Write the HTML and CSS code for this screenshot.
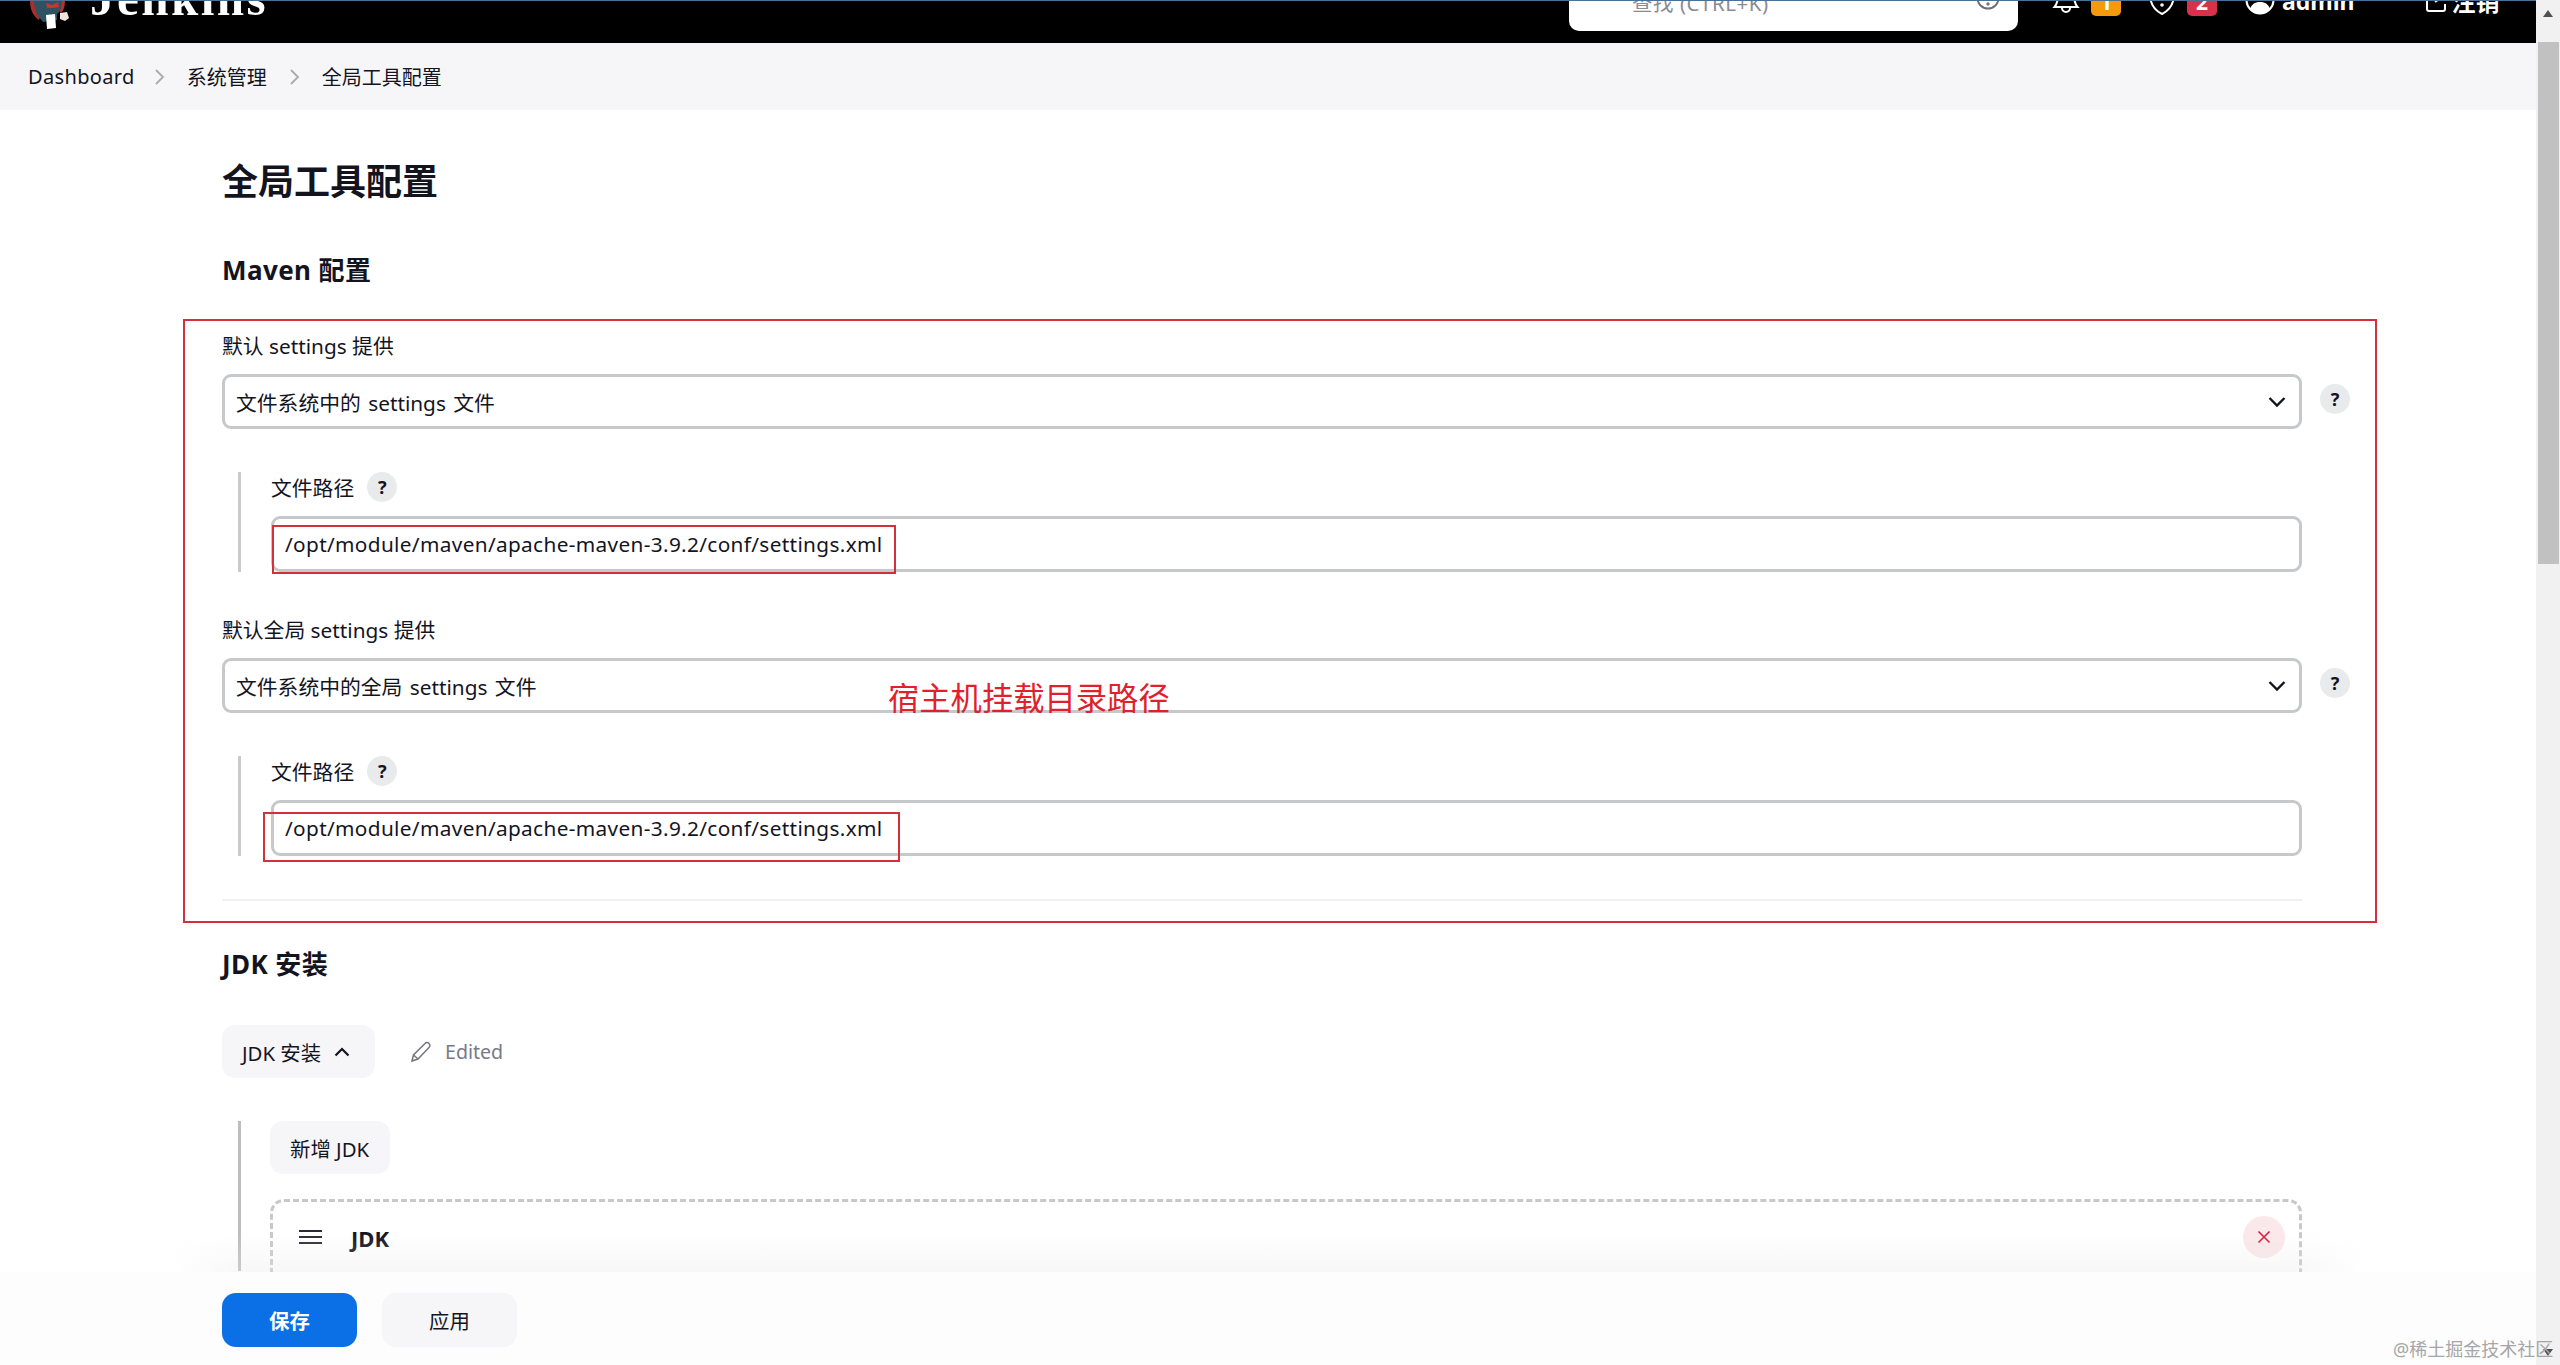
FILE: index.html
```html
<!DOCTYPE html>
<html lang="zh">
<head>
<meta charset="utf-8">
<title>全局工具配置</title>
<link rel="stylesheet" href="styles.css">
</head>
<body>
<div class="app">
  <div class="page">
    <header class="topbar">
      <div class="topbar-inner">
        <div class="brand">
          <svg class="butler" width="46" height="32" viewBox="0 0 46 32">
            <path d="M3 0 C3 10 6 16 12 20 L16 8 L18 0Z" fill="#a92f2c"/>
            <path d="M38 0 C38 6 37 10 34 13 L30 8 L28 0Z" fill="#b5322d"/>
            <path d="M7 0 H35 C35 8 33 12 30 14 L30 20 L16 22 L11 16 C8 10 7 6 7 0Z" fill="#2f5263"/>
            <path d="M19 3 L25 5 L31 2 L32 7 L26 8 L20 8Z" fill="#c9342c"/>
            <path d="M19 15 L28 14 L29 28 L20 29Z" fill="#fff"/>
            <path d="M33 13 L40 12 L42 18 L38 21 L33 19Z" fill="#f1e4d8"/>
          </svg>
          <span class="wordmark">Jenkins</span>
        </div>
        <div class="search">
          <svg class="search-icon" width="22" height="22" viewBox="0 0 22 22" fill="none" stroke="#4d4d58" stroke-width="2"><circle cx="10" cy="10" r="7"/><path d="M15 15l5 5"/></svg>
          <span class="search-text">查找 (CTRL+K)</span>
          <svg width="24" height="24" viewBox="0 0 24 24" fill="none" stroke="#6f6f7b" stroke-width="2"><circle cx="12" cy="12" r="10.5"/><path d="M9 9a3 3 0 1 1 4.500 2.600c-1 .6-1.500 1.200-1.500 2.400"/><circle cx="12" cy="18" r=".7"/></svg>
        </div>
        <div class="actions">
          <svg class="icon-bell" width="28" height="32" viewBox="0 0 28 32" fill="none" stroke="#fff" stroke-width="2"><path d="M14 2c-5 0-8 4-8 9 0 6-1 9-3.500 12h23C23 20 22 17 22 11c0-5-3-9-8-9z"/><path d="M10 24a4 4 0 0 0 8 0"/></svg>
          <span class="badge badge-orange">1</span>
          <svg class="icon-shield" width="28" height="32" viewBox="0 0 28 32" fill="none" stroke="#fff" stroke-width="2"><path d="M14 30C6 26 2 20 2 10V5l12-3 12 3v5c0 10-4 16-12 20z"/><path d="M14 9v7"/><circle cx="14" cy="21" r=".8"/></svg>
          <span class="badge badge-red">2</span>
          <svg class="icon-user" width="30" height="30" viewBox="0 0 30 30"><circle cx="15" cy="15" r="13.500" fill="none" stroke="#fff" stroke-width="2"/><circle cx="15" cy="11" r="5" fill="#fff"/><path d="M5 24c2-6 6-7 10-7s8 1 10 7c-3 3-6 5-10 5s-7-2-10-5z" fill="#fff"/></svg>
          <span class="user-name">admin</span>
          <svg class="icon-caret" width="12" height="8" viewBox="0 0 12 8" fill="none" stroke="#d5d5d5" stroke-width="1.500"><path d="M1 1l5 5 5-5"/></svg>
          <svg class="icon-logout" width="26" height="26" viewBox="0 0 26 26" fill="none" stroke="#fff" stroke-width="2"><path d="M12 2H4a2 2 0 0 0-2 2v18a2 2 0 0 0 2 2h14a2 2 0 0 0 2-2v-5"/><path d="M10 15L24 5M17 3h7v7"/></svg>
          <span class="logout-text">注销</span>
        </div>
      </div>
    </header>

    <nav class="breadcrumbs">
      <span class="crumb-latin">Dashboard</span>
      <svg class="crumb-sep" width="12" height="20" viewBox="0 0 12 20" fill="none" stroke="#a9a9b0" stroke-width="1.800"><path d="M2 3l7 7-7 7"/></svg>
      <span>系统管理</span>
      <svg class="crumb-sep" width="12" height="20" viewBox="0 0 12 20" fill="none" stroke="#a9a9b0" stroke-width="1.800"><path d="M2 3l7 7-7 7"/></svg>
      <span>全局工具配置</span>
    </nav>

    <main class="content">
      <h1 class="page-title">全局工具配置</h1>
      <h2 class="section-title">Maven 配置</h2>

      <div class="form-label">默认 settings 提供</div>
      <div class="select-row">
        <div class="select"><span>文件系统中的 settings 文件</span>
          <svg width="18" height="12" viewBox="0 0 18 12" fill="none" stroke="#14141f" stroke-width="2.400"><path d="M1.500 2l7.500 7.500L16.500 2"/></svg>
        </div>
        <span class="help">?</span>
      </div>
      <div class="nested">
        <div class="nested-label"><span>文件路径</span><span class="help">?</span></div>
        <div class="text-input">/opt/module/maven/apache-maven-3.9.2/conf/settings.xml</div>
      </div>

      <div class="form-label form-label-second">默认全局 settings 提供</div>
      <div class="select-row">
        <div class="select"><span>文件系统中的全局 settings 文件</span>
          <svg width="18" height="12" viewBox="0 0 18 12" fill="none" stroke="#14141f" stroke-width="2.400"><path d="M1.500 2l7.500 7.500L16.500 2"/></svg>
        </div>
        <span class="help">?</span>
      </div>
      <div class="nested">
        <div class="nested-label"><span>文件路径</span><span class="help">?</span></div>
        <div class="text-input">/opt/module/maven/apache-maven-3.9.2/conf/settings.xml</div>
      </div>

      <div class="divider"></div>

      <h2 class="section-title section-jdk">JDK 安装</h2>
      <div class="tool-row">
        <span class="btn btn-toggle">JDK 安装
          <svg width="16" height="10" viewBox="0 0 16 10" fill="none" stroke="#14141f" stroke-width="2.200"><path d="M1.500 8.500L8 2l6.500 6.500"/></svg>
        </span>
        <svg class="pencil" width="22" height="22" viewBox="0 0 22 22" fill="none" stroke="#77777f" stroke-width="1.500"><path d="M2 20l1.500-6L15 2.500a2.500 2.500 0 0 1 4 0 2.800 2.800 0 0 1 0 4L8 18z"/><path d="M3.500 14L8 18"/></svg>
        <span class="edited">Edited</span>
      </div>
      <div class="jdk-nested">
        <span class="btn btn-add">新增 JDK</span>
        <div class="repeat-box">
          <svg class="drag" width="23" height="14" viewBox="0 0 23 14" stroke="#2a2a35" stroke-width="2"><path d="M0 1h23M0 7h23M0 13h23"/></svg>
          <strong class="repeat-title">JDK</strong>
          <span class="delete"><svg width="14" height="14" viewBox="0 0 14 14" stroke="#d81b3c" stroke-width="1.600"><path d="M1.500 1.500l11 11M12.500 1.500l-11 11"/></svg></span>
        </div>
      </div>
    </main>

    <div class="bottom-bar">
      <span class="btn-save">保存</span>
      <span class="btn-apply">应用</span>
    </div>

    <div class="frame frame-main"></div>
    <div class="frame frame-path-one"></div>
    <div class="frame frame-path-two"></div>
    <div class="annotation">宿主机挂载目录路径</div>
  </div>

  <aside class="scrollbar">
    <span class="arrow-up"></span>
    <span class="thumb"></span>
    <span class="arrow-down"></span>
  </aside>
</div>
<div class="watermark">@稀土掘金技术社区</div>
</body>
</html>
```
FILE: styles.css
```css
* { box-sizing: border-box; }
html, body { margin: 0; height: 1365px; overflow: hidden; background: #fff; }
body {
  font-family: "Noto Sans", "Noto Sans CJK SC", sans-serif;
  font-size: 20.4px;
  color: #14141f;
  position: relative;
}
.app { display: flex; height: 1365px; }
.page { flex: 1; min-width: 0; position: relative; overflow: hidden; }

/* top bar, scrolled so that most of it is cut off */
.topbar { height: 43px; background: #000; border-top: 1px solid #4d7196; overflow: hidden; }
.topbar-inner {
  height: 86px;
  margin-top: -44px;
  display: flex;
  align-items: center;
  color: #fff;
}
.brand { display: flex; align-items: center; margin-left: 27px; width: 1542px; }
.butler { margin-top: 32px; }
.wordmark {
  margin-left: 17px;
  font: bold 49px/1 "Liberation Serif", serif;
  letter-spacing: 2.500px;
  margin-top: -4px;
}
.search {
  width: 449px;
  height: 62px;
  background: #fff;
  border-radius: 10px;
  display: flex;
  align-items: center;
  padding: 0 18px 0 20px;
  color: #8a8a95;
}
.search-icon { margin-top: -24px; }
.search-text { margin-left: 21px; flex: 1; margin-top: 4px; letter-spacing: .6px; }
.search svg:last-child { margin-top: -4px; }
.actions { display: flex; align-items: center; margin-left: 34px; }
.badge {
  width: 30px;
  height: 32px;
  border-radius: 5px;
  font-weight: 700;
  font-size: 21px;
  line-height: 36px;
  text-align: center;
  color: #fff;
}
.badge-orange { background: #f59a0c; margin-left: 11px; }
.icon-shield { margin-left: 27px; }
.badge-red { background: #d8314a; margin-left: 11px; }
.icon-user { margin-left: 28px; }
.user-name { font-weight: 700; font-size: 23px; margin-left: 7px; margin-top: 2px; }
.icon-caret { margin-left: 16px; margin-top: -10px; }
.icon-logout { margin-left: 42px; margin-top: 0; }
.logout-text { font-weight: 700; font-size: 24px; margin-left: 1px; margin-top: 0; }

/* breadcrumb */
.breadcrumbs {
  height: 67px;
  background: #f6f6f8;
  display: flex;
  align-items: center;
  padding-left: 28px;
  font-size: 20px;
}
.crumb-latin { letter-spacing: .35px; margin-right: -3px; }
.crumb-sep { margin: 0 21px 0 22px; }

/* content */
.content { padding: 50px 0 0 222px; width: 2302px; }
.page-title { margin: 0; font-size: 36px; line-height: 44px; font-weight: 700; }
.section-title { margin: 0; font-size: 26px; line-height: 36px; font-weight: 700; letter-spacing: .4px; }
.content > .section-title:first-of-type { margin-top: 48px; }
.form-label { margin-top: 44px; line-height: 28px; font-size: 20.8px; }
.form-label-second { margin-top: 44px; }
.select-row { position: relative; margin-top: 14px; }
.select {
  height: 55px;
  border: 3px solid #c6c9cb;
  border-radius: 9px;
  display: flex;
  align-items: center;
  justify-content: space-between;
  padding: 0 13px 0 11px;
  font-size: 20.8px;
  word-spacing: 2px;
}
.select-row .help { position: absolute; left: 2098px; top: 10px; }
.help {
  display: inline-block;
  width: 30px;
  height: 30px;
  border-radius: 50%;
  background: #e9eaeb;
  text-align: center;
  font-size: 18px;
  line-height: 30px;
  font-weight: 700;
}
.nested {
  margin: 43px 0 0 16px;
  border-left: 3px solid #c8cacc;
  padding-left: 30px;
  height: 100px;
}
.nested-label { display: flex; align-items: center; gap: 13px; height: 30px; font-size: 20.8px; }
.text-input {
  margin-top: 14px;
  height: 56px;
  border: 3px solid #c6c9cb;
  border-radius: 9px;
  display: flex;
  align-items: center;
  padding-left: 11px;
  font-size: 20.8px;
  letter-spacing: .34px;
}
.divider { height: 2px; background: #f1f1f3; margin-top: 43px; }
.section-jdk { margin-top: 45px; }
.tool-row { display: flex; align-items: center; margin-top: 43px; }
.btn {
  display: inline-flex;
  align-items: center;
  background: #f6f6f8;
  border-radius: 13px;
  height: 53px;
  padding: 0 20px;
}
.btn-toggle { width: 153px; gap: 13px; }
.pencil { margin-left: 35px; }
.edited { margin-left: 13px; color: #7a7a88; font-size: 19.600px; }
.jdk-nested {
  margin: 43px 0 0 16px;
  border-left: 3px solid #bdbdbd;
  padding-left: 29px;
  height: 150px;
}
.btn-add { display: flex; width: 120px; }
.repeat-box {
  margin-top: 25px;
  height: 90px;
  border: 3px dashed #c8c8c8;
  border-radius: 14px;
  position: relative;
  display: flex;
  align-items: flex-start;
  padding: 28px 0 0 26px;
}
.repeat-title { margin-left: 29px; margin-top: -7px; font-size: 22px; }
.delete {
  position: absolute;
  right: 14px;
  top: 14px;
  width: 42px;
  height: 42px;
  border-radius: 50%;
  background: #fbe8ea;
  display: flex;
  align-items: center;
  justify-content: center;
}

/* sticky bottom bar */
.bottom-bar {
  position: absolute;
  left: 0;
  right: 0;
  top: 1272px;
  bottom: 0;
  background: #fdfdfd;
  display: flex;
  gap: 25px;
  padding: 21px 0 0 222px;
}
.bottom-bar::before {
  content: "";
  position: absolute;
  left: 170px;
  right: 170px;
  top: -40px;
  height: 40px;
  background: linear-gradient(to bottom, rgba(232,232,234,0), rgba(232,232,234,.32));
  -webkit-mask-image: linear-gradient(to right, transparent, #000 70px, #000 calc(100% - 70px), transparent);
  mask-image: linear-gradient(to right, transparent, #000 70px, #000 calc(100% - 70px), transparent);
  pointer-events: none;
}
.btn-save, .btn-apply {
  width: 135px;
  height: 54px;
  border-radius: 14px;
  display: flex;
  align-items: center;
  justify-content: center;
}
.btn-save { background: #0b6fe6; color: #fff; font-weight: 700; }
.btn-apply { background: #f6f6f8; }

/* red annotations drawn over the page */
.frame { position: absolute; border: 2px solid #d2303c; pointer-events: none; }
.frame-main { left: 183px; top: 319px; width: 2194px; height: 604px; }
.frame-path-one { left: 272px; top: 525px; width: 624px; height: 49px; }
.frame-path-two { left: 263px; top: 812px; width: 637px; height: 50px; }
.annotation {
  position: absolute;
  left: 888px;
  top: 676px;
  font-size: 31.300px;
  line-height: 44px;
  color: #e0202c;
  white-space: nowrap;
}

/* scrollbar */
.scrollbar { width: 24px; flex: none; background: #f1f1f1; position: relative; }
.thumb { position: absolute; left: 2px; right: 1px; top: 42px; height: 522px; background: #c1c1c1; }
.arrow-up, .arrow-down {
  position: absolute;
  left: 7px;
  width: 0;
  height: 0;
  border-left: 5px solid transparent;
  border-right: 5px solid transparent;
}
.arrow-up { top: 10px; border-bottom: 7px solid #505050; }
.arrow-down { top: 1349px; border-top: 7px solid #505050; }

.watermark {
  position: absolute;
  left: 2393px;
  top: 1336px;
  font-size: 18px;
  line-height: 26px;
  color: #a6a6a6;
  white-space: nowrap;
}
```
